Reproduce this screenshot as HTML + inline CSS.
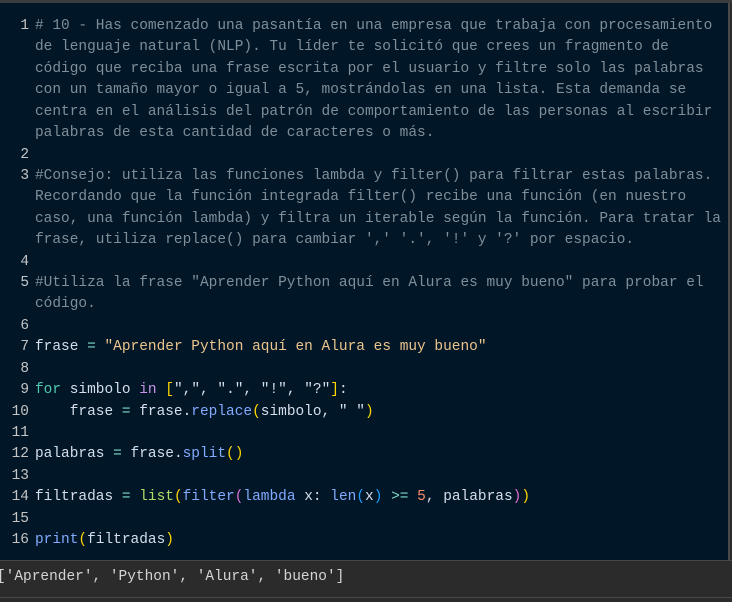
<!DOCTYPE html>
<html><head><meta charset="utf-8"><style>
html,body{margin:0;padding:0;width:732px;height:602px;overflow:hidden;background:#2b2b2b;}
#top{position:absolute;left:0;top:0;width:732px;height:3px;background:#3c3c3c;}
#ed{position:absolute;left:0;top:3px;width:728px;height:557px;background:#011627;}
#vr{position:absolute;left:728px;top:3px;width:2px;height:557px;background:#4a4a4a;}
#code{position:absolute;left:0;top:16px;font-family:"Liberation Mono","DejaVu Sans Mono",monospace;font-size:14.47px;line-height:21.42px;color:#d6deeb;}
.r{display:flex}
.n{width:29px;text-align:right;color:#c5c5c5;flex:none}
.t{padding-left:6px;white-space:pre;width:696px}
.c{color:#7f8e98}
.k{color:#4ec9b0}.p{color:#c792ea}.s{color:#ecc48d}.f{color:#82aaff}.l{color:#addb67}.o{color:#7fdbca}.num{color:#f78c6c}
.y{color:#ffd700}.m{color:#da70d6}.b{color:#179fff}
#sep1{position:absolute;left:0;top:560px;width:732px;height:1px;background:#474747}
#out{position:absolute;left:-3px;top:567px;font-family:"Liberation Mono","DejaVu Sans Mono",monospace;font-size:14.47px;line-height:21px;color:#d4d4d4;white-space:pre}
#sep2{position:absolute;left:0;top:597px;width:732px;height:1px;background:#474747}
</style></head><body>
<div id="top"></div><div id="ed"></div><div id="vr"></div>
<div id="code"><div class="r"><div class="n">1</div><div class="t c"># 10 - Has comenzado una pasantía en una empresa que trabaja con procesamiento<br>de lenguaje natural (NLP). Tu líder te solicitó que crees un fragmento de<br>código que reciba una frase escrita por el usuario y filtre solo las palabras<br>con un tamaño mayor o igual a 5, mostrándolas en una lista. Esta demanda se<br>centra en el análisis del patrón de comportamiento de las personas al escribir<br>palabras de esta cantidad de caracteres o más.</div></div><div class="r"><div class="n">2</div><div class="t"> </div></div><div class="r"><div class="n">3</div><div class="t c">#Consejo: utiliza las funciones lambda y filter() para filtrar estas palabras.<br>Recordando que la función integrada filter() recibe una función (en nuestro<br>caso, una función lambda) y filtra un iterable según la función. Para tratar la<br>frase, utiliza replace() para cambiar ',' '.', '!' y '?' por espacio.</div></div><div class="r"><div class="n">4</div><div class="t"> </div></div><div class="r"><div class="n">5</div><div class="t c">#Utiliza la frase "Aprender Python aquí en Alura es muy bueno" para probar el<br>código.</div></div><div class="r"><div class="n">6</div><div class="t"> </div></div><div class="r"><div class="n">7</div><div class="t">frase <span class="o">=</span> <span class="s">"Aprender Python aquí en Alura es muy bueno"</span></div></div><div class="r"><div class="n">8</div><div class="t"> </div></div><div class="r"><div class="n">9</div><div class="t"><span class="k">for</span> simbolo <span class="p">in</span> <span class="y">[</span>",", ".", "!", "?"<span class="y">]</span>:</div></div><div class="r"><div class="n">10</div><div class="t">    frase <span class="o">=</span> frase.<span class="f">replace</span><span class="y">(</span>simbolo, " "<span class="y">)</span></div></div><div class="r"><div class="n">11</div><div class="t"> </div></div><div class="r"><div class="n">12</div><div class="t">palabras <span class="o">=</span> frase.<span class="f">split</span><span class="y">()</span></div></div><div class="r"><div class="n">13</div><div class="t"> </div></div><div class="r"><div class="n">14</div><div class="t">filtradas <span class="o">=</span> <span class="l">list</span><span class="y">(</span><span class="f">filter</span><span class="m">(</span><span class="f">lambda</span> x: <span class="f">len</span><span class="b">(</span>x<span class="b">)</span> <span class="o">&gt;=</span> <span class="num">5</span>, palabras<span class="m">)</span><span class="y">)</span></div></div><div class="r"><div class="n">15</div><div class="t"> </div></div><div class="r"><div class="n">16</div><div class="t"><span class="f">print</span><span class="y">(</span>filtradas<span class="y">)</span></div></div></div>
<div id="sep1"></div>
<div id="out">['Aprender', 'Python', 'Alura', 'bueno']</div>
<div id="sep2"></div>
</body></html>
